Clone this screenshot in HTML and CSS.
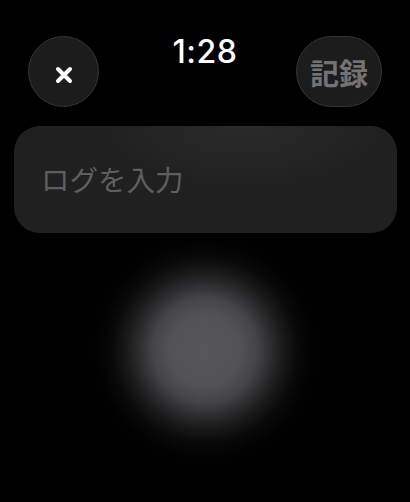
FILE: index.html
```html
<!DOCTYPE html>
<html lang="ja">
<head>
<meta charset="utf-8">
<link rel="stylesheet" href="styles.css">
</head>
<body>
<div class="screen">
  <div class="header">
    <button class="btn-close" aria-label="閉じる">
      <svg width="18" height="18" viewBox="0 0 18 18"><path d="M3 3 L15 15 M15 3 L3 15" stroke="#fff" stroke-width="4" stroke-linecap="round" fill="none"/></svg>
    </button>
    <div class="time">1:28</div>
    <button class="btn-record">記録</button>
  </div>
  <div class="field">
    <span class="placeholder">ログを入力</span>
  </div>
</div>
</body>
</html>
```
FILE: styles.css
```css
html, body {
  margin: 0;
  padding: 0;
  background: #000;
}
.screen {
  width: 410px;
  height: 502px;
  overflow: hidden;
  box-sizing: border-box;
  padding: 36px 13px 0 14px;
  background:
    radial-gradient(circle at 205px 350px, #57575b 0px, #525256 36px, #454548 52px, #303032 64px, #1a1a1b 78px, #0a0a0a 92px, #020202 106px, #000 118px),
    radial-gradient(ellipse 90px 60px at 205px 110px, #151515 0%, #000 100%);
  font-family: "Noto Sans CJK JP", "Noto Sans", sans-serif;
}
.header {
  display: grid;
  grid-template-columns: 1fr auto 1fr;
  align-items: start;
  padding: 0 15px 0 14px;
  height: 71px;
}
.btn-close {
  justify-self: start;
  width: 71px;
  height: 71px;
  border-radius: 50%;
  background: #1c1c1c;
  border: 1.5px solid #353535;
  box-sizing: border-box;
  display: flex;
  align-items: center;
  justify-content: center;
  padding: 6px 0 0 0;
  margin: 0;
}
.time {
  font-family: "Inter", "Roboto", sans-serif;
  font-weight: 500;
  font-size: 32px;
  line-height: 1;
  color: #fff;
  margin-top: 0px;
  letter-spacing: 0.5px;
}
.btn-record {
  justify-self: end;
  width: 86px;
  height: 71px;
  border-radius: 36px;
  background: #1c1c1c;
  border: 1.5px solid #353535;
  box-sizing: border-box;
  color: #737373;
  font-family: "Noto Sans CJK JP", sans-serif;
  font-weight: 700;
  font-size: 29px;
  line-height: 1;
  padding: 2px 0 0 0;
  margin: 0;
}
.field {
  margin-top: 19px;
  width: 383px;
  height: 107px;
  border-radius: 26px;
  background:
    radial-gradient(ellipse 140px 60px at 230px 0px, #2b2b2b 0%, rgba(32,32,32,0) 100%),
    #202020;
  display: flex;
  align-items: center;
  padding-left: 27px;
  box-sizing: border-box;
}
.placeholder {
  color: #5f5f5f;
  font-size: 28.5px;
  line-height: 1;
  font-weight: 400;
  margin-top: 0px;
}
```
